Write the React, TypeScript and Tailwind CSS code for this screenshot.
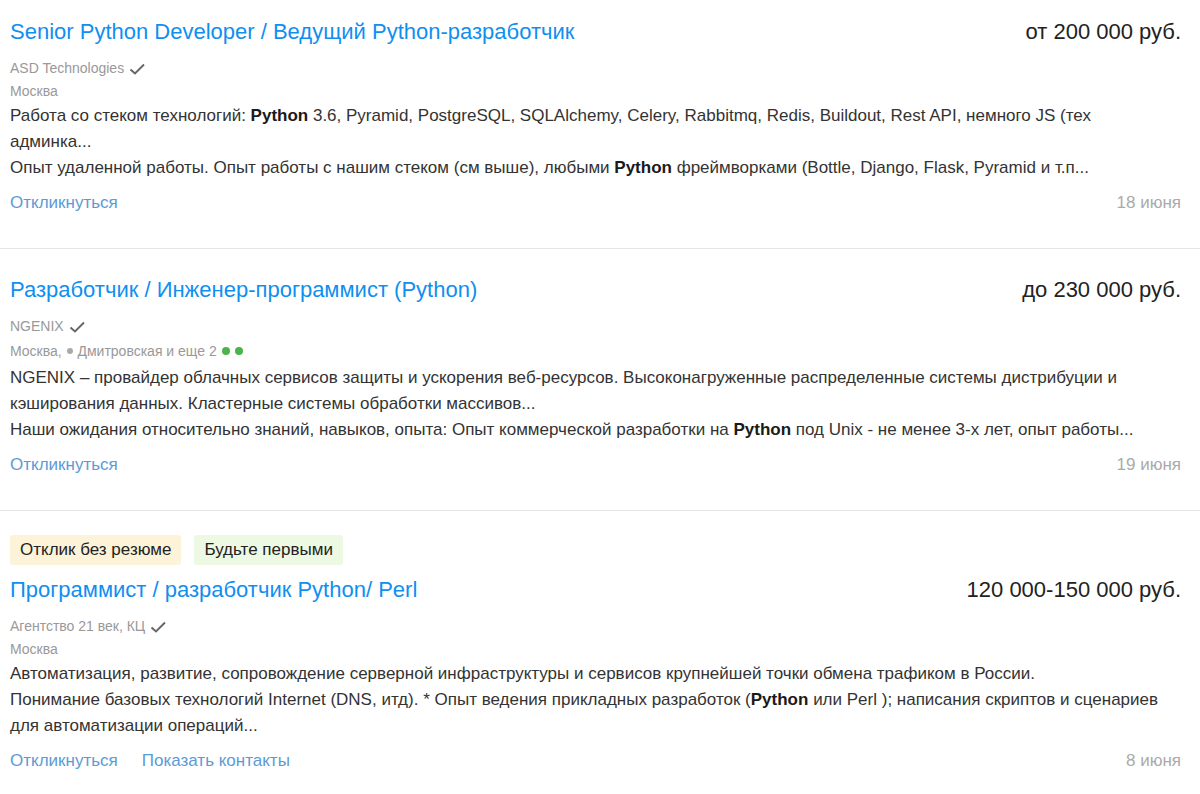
import { ReactNode } from "react";

type Vacancy = {
  title: string;
  salary: string;
  company: string;
  location: ReactNode;
  text: ReactNode;
  date: string;
  badges?: { label: string; className: string }[];
  contacts?: boolean;
  first?: boolean;
  tallLocation?: boolean;
};

function CheckMark() {
  return (
    <svg width="17" height="14" viewBox="0 0 17 14" className="ml-[5px] inline-block">
      <polyline points="1.5,7.5 6,11.5 15,2.5" fill="none" stroke="#666" strokeWidth="2" />
    </svg>
  );
}

const B = ({ children }: { children: ReactNode }) => (
  <b className="font-bold text-[#1a1a1a]">{children}</b>
);

const vacancies: Vacancy[] = [
  {
    first: true,
    title: "Senior Python Developer / Ведущий Python-разработчик",
    salary: "от 200 000 руб.",
    company: "ASD Technologies",
    location: "Москва",
    text: (
      <>
        <p>
          Работа со стеком технологий: <B>Python</B> 3.6, Pyramid, PostgreSQL, SQLAlchemy, Celery,
          Rabbitmq, Redis, Buildout, Rest API, немного JS (тех
          <br />
          админка...
        </p>
        <p>
          Опыт удаленной работы. Опыт работы с нашим стеком (см выше), любыми <B>Python</B>{" "}
          фреймворками (Bottle, Django, Flask, Pyramid и т.п...
        </p>
      </>
    ),
    date: "18 июня",
  },
  {
    title: "Разработчик / Инженер-программист (Python)",
    salary: "до 230 000 руб.",
    company: "NGENIX",
    tallLocation: true,
    location: (
      <>
        Москва,{" "}
        <span className="mx-[1px] inline-block size-[6px] rounded-full bg-[#aaa] align-[2px]" />{" "}
        Дмитровская и еще 2{" "}
        <span className="ml-[1px] inline-block size-[8px] rounded-full bg-[#4bb34b] align-[1px]" />
        <span className="ml-[5px] inline-block size-[8px] rounded-full bg-[#4bb34b] align-[1px]" />
      </>
    ),
    text: (
      <>
        <p>
          NGENIX – провайдер облачных сервисов защиты и ускорения веб-ресурсов. Высоконагруженные
          распределенные системы дистрибуции и кэширования данных. Кластерные системы обработки
          массивов...
        </p>
        <p>
          Наши ожидания относительно знаний, навыков, опыта: Опыт коммерческой разработки на{" "}
          <B>Python</B> под Unix - не менее 3-х лет, опыт работы...
        </p>
      </>
    ),
    date: "19 июня",
  },
  {
    badges: [
      { label: "Отклик без резюме", className: "bg-[#fcf3d9]" },
      { label: "Будьте первыми", className: "bg-[#edf9e2]" },
    ],
    title: "Программист / разработчик Python/ Perl",
    salary: "120 000-150 000 руб.",
    company: "Агентство 21 век, КЦ",
    location: "Москва",
    text: (
      <>
        <p>
          Автоматизация, развитие, сопровождение серверной инфраструктуры и сервисов крупнейшей
          точки обмена трафиком в России.
        </p>
        <p>
          Понимание базовых технологий Internet (DNS, итд). * Опыт ведения прикладных разработок (<B>Python</B>{" "}
          или Perl ); написания скриптов и сценариев для автоматизации операций...
        </p>
      </>
    ),
    date: "8 июня",
    contacts: true,
  },
];

function VacancyCard({ v }: { v: Vacancy }) {
  return (
    <div
      className={`border-b border-[#e5e5e5] pl-[10px] pr-[19px] pb-[32px] ${
        v.first ? "pt-[17px]" : v.badges ? "pt-[24px]" : "pt-[26px]"
      }`}
    >
      {v.badges && (
        <div className="mb-[10px] flex gap-[13px]">
          {v.badges.map((b) => (
            <span
              key={b.label}
              className={`h-[30px] rounded-[3px] px-[10px] text-[17px] leading-[30px] text-[#222] ${b.className}`}
            >
              {b.label}
            </span>
          ))}
        </div>
      )}
      <div className="flex items-start justify-between">
        <a className="text-[22px] leading-[30px] text-[#0f8ff0]">{v.title}</a>
        <span className="text-[22px] leading-[30px] text-[#222]">{v.salary}</span>
      </div>
      <div className="mt-[10px] flex items-center text-[14px] leading-[23px] text-[#999]">
        {v.company}
        <CheckMark />
      </div>
      <div
        className={`text-[14px] text-[#999] ${v.tallLocation ? "leading-[27px]" : "leading-[23px]"}`}
      >
        {v.location}
      </div>
      <div className="text-[17px] leading-[26px] text-[#333]">{v.text}</div>
      <div className="mt-[9px] flex items-center justify-between text-[17px] leading-[26px]">
        <div className="flex gap-[24px] text-[#5c9ad6]">
          <a>Откликнуться</a>
          {v.contacts && <a>Показать контакты</a>}
        </div>
        <span className="text-[#aaa]">{v.date}</span>
      </div>
    </div>
  );
}

export default function App() {
  return (
    <div className="min-h-[794px] bg-white font-['Liberation_Sans',Arial,sans-serif]">
      {vacancies.map((v) => (
        <VacancyCard key={v.title} v={v} />
      ))}
    </div>
  );
}
